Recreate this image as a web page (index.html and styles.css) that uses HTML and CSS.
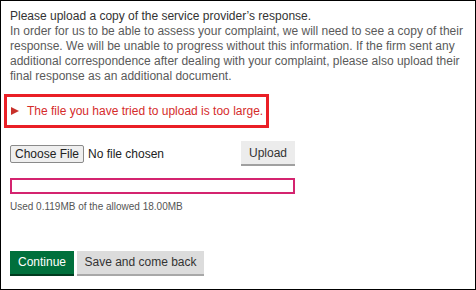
FILE: index.html
```html
<!DOCTYPE html>
<html>
<head>
<meta charset="utf-8">
<link rel="stylesheet" href="styles.css">
</head>
<body>
<div class="frame">
  <div class="intro">
    <div class="title">Please upload a copy of the service provider’s response.</div>
    <p class="desc">In order for us to be able to assess your complaint, we will need to see a copy of their response. We will be unable to progress without this information. If the firm sent any additional correspondence after dealing with your complaint, please also upload their final response as an additional document.</p>
  </div>
  <div class="error"><svg class="tri" width="8" height="8" viewBox="0 0 8 8"><polygon points="0,0 8,4 0,8" fill="#c8302a"/></svg><span>The file you have tried to upload is too large.</span></div>
  <div class="file-row">
    <div class="picker"><span class="choose">Choose File</span><span class="nofile">No file chosen</span></div>
    <span class="upload">Upload</span>
  </div>
  <div class="bar"></div>
  <div class="used">Used 0.119MB of the allowed 18.00MB</div>
  <div class="actions">
    <span class="btn continue">Continue</span>
    <span class="btn save">Save and come back</span>
  </div>
</div>
</body>
</html>
```
FILE: styles.css
```css
html, body { margin: 0; padding: 0; background: #fff; }
body { font-family: "Liberation Sans", Arial, sans-serif; }
.frame {
  width: 474px;
  height: 288px;
  border: 1px solid #000;
  display: flex;
  flex-direction: column;
  overflow: hidden;
}
.intro { padding: 8px 4px 0 9px; }
.title { font-size: 12px; line-height: 15px; color: #333; }
.desc { margin: 0; font-size: 12px; line-height: 15px; color: #5a5a5a; }
.error {
  margin: 10px 0 0 3px;
  width: 259px;
  height: 28px;
  border: 3px solid #ea1f26;
  display: flex;
  align-items: center;
  font-size: 12px;
  color: #d52b2b;
}
.tri { margin: 0 8px 0 4px; flex: none; }
.file-row {
  margin: 13px 0 0 9px;
  width: 285px;
  display: flex;
  align-items: center;
  justify-content: space-between;
}
.picker { display: flex; align-items: center; }
.choose {
  box-sizing: border-box;
  height: 18px;
  width: 74px;
  text-align: center;
  border: 1px solid #8a8a8a;
  border-radius: 2px;
  background: #efefef;
  font-size: 12px;
  line-height: 16px;
  color: #222;
}
.nofile { margin-left: 4px; font-size: 12px; color: #222; }
.upload {
  box-sizing: border-box;
  height: 25px;
  width: 54px;
  text-align: center;
  background: #ececec;
  border-bottom: 2px solid #a0a0a0;
  font-size: 12px;
  line-height: 24px;
  color: #333;
}
.bar {
  margin: 12px 0 0 9px;
  box-sizing: border-box;
  width: 285px;
  height: 16px;
  border: 2px solid #d4246f;
}
.used { margin: 7px 0 0 9px; font-size: 10px; line-height: 12px; color: #555; }
.actions { margin: 38px 0 0 9px; display: flex; gap: 3px; }
.btn {
  box-sizing: border-box;
  height: 25px;
  font-size: 12px;
  line-height: 23px;
  text-align: center;
}
.continue {
  width: 64px;
  background: #00703c;
  color: #fff;
  border-bottom: 2px solid #003b1f;
}
.save {
  width: 127px;
  background: #dcdcdc;
  color: #333;
  border-bottom: 2px solid #a8a8a8;
}
```
